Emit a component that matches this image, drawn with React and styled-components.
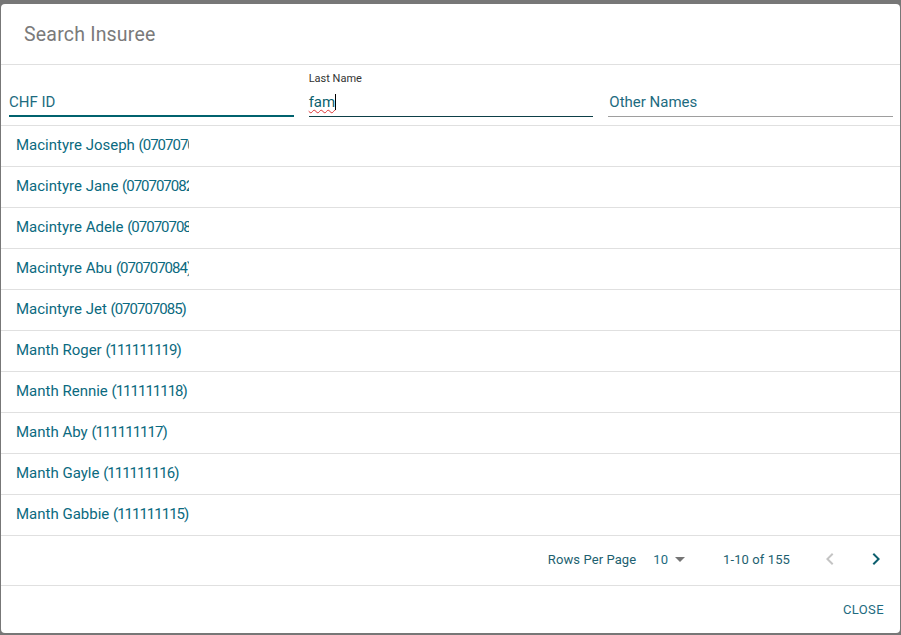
import React from "react";
import styled, { createGlobalStyle } from "styled-components";

const Global = createGlobalStyle`
  html, body { margin: 0; padding: 0; background: #777777; }
  body { font-family: Roboto, "Open Sans", sans-serif; }
`;

const Backdrop = styled.div`
  width: 901px;
  height: 635px;
  background: #777777;
  padding: 4px 1px 2px 1px;
  box-sizing: border-box;
  display: flex;
`;

const Dialog = styled.div`
  flex: 1;
  background: #fff;
  border-radius: 4px;
  display: flex;
  flex-direction: column;
  overflow: hidden;
`;

const Title = styled.div`
  height: 61px;
  box-sizing: border-box;
  padding: 0 23px;
  display: flex;
  align-items: center;
  font-size: 19.5px;
  color: #7a7a7a;
  border-bottom: 1px solid #e0e0e0;
  letter-spacing: 0.2px;
`;

const Filters = styled.div`
  height: 61px;
  box-sizing: border-box;
  border-bottom: 1px solid #e0e0e0;
  display: grid;
  grid-template-columns: 1fr 1fr 1fr;
  column-gap: 15px;
  padding: 0 7px 0 8px;
`;

const Field = styled.div`
  display: flex;
  flex-direction: column;
  justify-content: flex-end;
  padding-bottom: 8px;
`;

const Label = styled.div`
  font-size: 11px;
  color: #333;
  height: 14px;
  margin-bottom: 7px;
`;

const Input = styled.div`
  font-size: 15px;
  color: ${(p) => (p.$value ? "#0b5f6e" : "#1d6b80")};
  height: 24px;
  line-height: 18px;
  box-sizing: border-box;
  border-bottom: ${(p) => p.$line};
  display: flex;
  align-items: flex-start;
  padding-left: ${(p) => (p.$pad ? "1px" : "0")};
`;

const Typed = styled.span`
  text-decoration: underline wavy #d33;
  text-decoration-thickness: 1px;
  text-underline-offset: 2px;
`;

const Caret = styled.span`
  display: inline-block;
  width: 1px;
  height: 16px;
  background: #000;
  margin-top: 1px;
`;

const List = styled.div`
  display: flex;
  flex-direction: column;
`;

const Row = styled.div`
  height: 41px;
  box-sizing: border-box;
  border-bottom: 1px solid #e0e0e0;
  display: flex;
  align-items: center;
  padding: 0 0 2px 15px;
`;

const Cell = styled.div`
  width: 173px;
  overflow: hidden;
  white-space: nowrap;
  font-size: 15px;
  color: #0b6a80;
`;

const Num = styled.span`
  letter-spacing: -1px;
`;

const Pager = styled.div`
  height: 50px;
  box-sizing: border-box;
  border-bottom: 1px solid #e0e0e0;
  display: flex;
  align-items: center;
  justify-content: flex-end;
  padding: 0 12px 3px 0;
  font-size: 13px;
  letter-spacing: 0.1px;
  color: #1d5f70;
`;

const PagerText = styled.span`
  margin-right: ${(p) => p.$mr || 0}px;
`;

const Select = styled.div`
  display: flex;
  align-items: center;
  gap: 7px;
  margin-right: 38px;
  color: #1d6b80;
`;

const IconBtn = styled.div`
  width: 24px;
  height: 24px;
  display: flex;
  align-items: center;
  justify-content: center;
  margin-left: ${(p) => p.$ml || 0}px;
`;

const Actions = styled.div`
  flex: 1;
  display: flex;
  align-items: center;
  justify-content: flex-end;
  padding-right: 16px;
`;

const CloseBtn = styled.div`
  font-size: 13px;
  color: #1d6b80;
  letter-spacing: 0.4px;
  text-transform: uppercase;
`;

const rows = [
  ["Macintyre Joseph", "070707081"],
  ["Macintyre Jane", "070707082"],
  ["Macintyre Adele", "070707083"],
  ["Macintyre Abu", "070707084"],
  ["Macintyre Jet", "070707085"],
  ["Manth Roger", "111111119"],
  ["Manth Rennie", "111111118"],
  ["Manth Aby", "111111117"],
  ["Manth Gayle", "111111116"],
  ["Manth Gabbie", "111111115"],
];

const Chevron = ({ dir, color }) => (
  <svg width="24" height="24" viewBox="0 0 24 24">
    <path
      d={dir === "left" ? "M15.41 7.41 14 6l-6 6 6 6 1.41-1.41L10.83 12z" : "M10 6 8.59 7.41 13.17 12l-4.58 4.59L10 18l6-6z"}
      fill={color}
    />
  </svg>
);

export default function App() {
  return (
    <>
      <Global />
      <Backdrop>
        <Dialog>
          <Title>Search Insuree</Title>
          <Filters>
            <Field>
              <Input $line="2px solid #00626e">CHF ID</Input>
            </Field>
            <Field>
              <Label>Last Name</Label>
              <Input $line="1px solid #0d3f47" $value>
                <Typed>fam</Typed>
                <Caret />
              </Input>
            </Field>
            <Field>
              <Input $line="1px solid #9e9e9e" $pad>Other Names</Input>
            </Field>
          </Filters>
          <List>
            {rows.map(([name, id]) => (
              <Row key={id}>
                <Cell>
                  {name} <Num>({id})</Num>
                </Cell>
              </Row>
            ))}
          </List>
          <Pager>
            <PagerText $mr={17}>Rows Per Page</PagerText>
            <Select>
              <span>10</span>
              <svg width="10" height="5" viewBox="0 0 10 5">
                <path d="M0 0h10L5 5z" fill="#757575" />
              </svg>
            </Select>
            <PagerText $mr={28}>1-10 of 155</PagerText>
            <IconBtn>
              <Chevron dir="left" color="#c4c4c4" />
            </IconBtn>
            <IconBtn $ml={22}>
              <Chevron dir="right" color="#0d5f6e" />
            </IconBtn>
          </Pager>
          <Actions>
            <CloseBtn>Close</CloseBtn>
          </Actions>
        </Dialog>
      </Backdrop>
    </>
  );
}
